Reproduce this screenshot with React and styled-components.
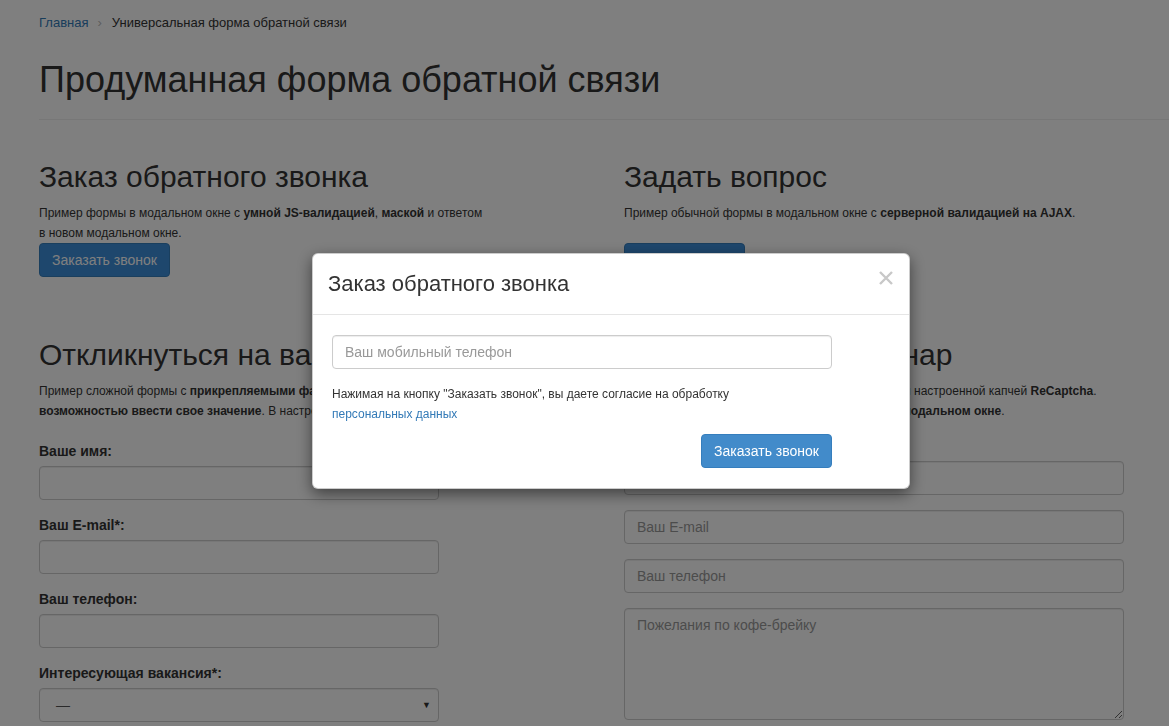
import React from "react"
import styled, { createGlobalStyle } from "styled-components"

const GlobalStyle = createGlobalStyle`
  * { box-sizing: border-box; }
  html, body {
    margin: 0;
    padding: 0;
    background: #fff;
  }
  body {
    font-family: "Liberation Sans", Arial, Helvetica, sans-serif;
    font-size: 13px;
    line-height: 20px;
    color: #333;
    overflow: hidden;
  }
`

//  Page
const Page = styled.div`
  height: 726px;
  padding-left: 39px;
  overflow: hidden;
`

const Breadcrumb = styled.nav`
  display: flex;
  align-items: center;
  padding-top: 14px;
  font-size: 13px;
  line-height: 18px;
`

const Crumb = styled.a`
  color: #337ab7;
  text-decoration: none;
`

const Sep = styled.span`
  color: #bbb;
  margin: 0 10px 0 9px;
`

const PageTitle = styled.h1`
  margin: 28px 0 0;
  font-size: 36px;
  line-height: 39.6px;
  font-weight: 400;
`

const Hr = styled.hr`
  margin: 19px 0 0;
  border: 0;
  border-top: 1px solid #eee;
`

const Row = styled.div`
  display: grid;
  grid-template-columns: 585px 1fr;
  margin-top: ${p => p.$top}px;
`

const H2 = styled.h2`
  margin: 0;
  font-size: 30px;
  line-height: 33px;
  font-weight: 400;
  white-space: nowrap;
`

const Lead = styled.p`
  margin: 10px 0 0;
  min-height: 40px;
  font-size: 12px;
  line-height: 20px;
  white-space: nowrap;

  b {
    font-weight: 700;
  }
`

const Button = styled.button`
  display: inline-block;
  height: 34px;
  padding: 0 12px;
  font-family: inherit;
  font-size: 14px;
  color: #fff;
  background: ${p => p.$bg || "#428bca"};
  border: 1px solid #357ebd;
  border-radius: 4px;
  cursor: pointer;
`

//  Forms
const Form = styled.form`
  margin-top: ${p => p.$top}px;
`

const Group = styled.div`
  margin-bottom: 15px;
`

const Label = styled.label`
  display: block;
  margin-bottom: 5px;
  font-size: 14px;
  font-weight: 700;
  line-height: 20px;
`

const Input = styled.input`
  display: block;
  width: ${p => p.$w}px;
  height: 34px;
  padding: 6px 12px;
  font-family: inherit;
  font-size: 14px;
  color: #555;
  background: #fff;
  border: 1px solid #ccc;
  border-radius: 4px;
  box-shadow: inset 0 1px 1px rgba(0, 0, 0, 0.075);
  outline: none;

  &::placeholder {
    color: #999;
  }
`

const TextArea = styled.textarea`
  display: block;
  width: ${p => p.$w}px;
  height: 112px;
  padding: 6px 12px;
  font-family: inherit;
  font-size: 14px;
  line-height: 20px;
  color: #555;
  border: 1px solid #ccc;
  border-radius: 4px;
  box-shadow: inset 0 1px 1px rgba(0, 0, 0, 0.075);
  resize: vertical;
  outline: none;

  &::placeholder {
    color: #999;
  }
`

const Select = styled.div`
  display: flex;
  align-items: center;
  justify-content: space-between;
  width: 400px;
  height: 34px;
  padding: 0 7px 0 16px;
  font-size: 14px;
  color: #555;
  background: #fff;
  border: 1px solid #ccc;
  border-radius: 4px;
  box-shadow: inset 0 1px 1px rgba(0, 0, 0, 0.075);
`

const Caret = styled.span`
  font-size: 9px;
  color: #333;
`

//  Modal
const Backdrop = styled.div`
  position: fixed;
  inset: 0;
  background: rgba(0, 0, 0, 0.5);
`

const Modal = styled.div`
  position: fixed;
  top: 253px;
  left: 312px;
  width: 598px;
  background: #fff;
  border: 1px solid rgba(0, 0, 0, 0.2);
  border-radius: 6px;
  box-shadow: 0 5px 15px rgba(0, 0, 0, 0.5);
`

const ModalHeader = styled.div`
  display: flex;
  justify-content: space-between;
  align-items: flex-start;
  padding: 15px;
  border-bottom: 1px solid #e5e5e5;
`

const ModalTitle = styled.h4`
  margin: 0;
  font-size: 22px;
  line-height: 30px;
  font-weight: 400;
  color: #333;
`

const Close = styled.button`
  display: flex;
  margin: 1px 0 0;
  padding: 0;
  background: transparent;
  border: 0;
  cursor: pointer;
`

const ModalBody = styled.div`
  padding: 20px 20px 20px 19px;
`

const BodyInner = styled.div`
  width: 500px;
`

const Consent = styled.p`
  margin: 15px 0 0;
  font-size: 12px;
  line-height: 20px;

  a {
    color: #337ab7;
    text-decoration: none;
  }
`

const Actions = styled.div`
  display: flex;
  justify-content: flex-end;
  margin-top: 10px;
`

const CloseIcon = () => (
  <svg width="16" height="16" viewBox="0 0 16 16">
    <path d="M2 2 L14 14 M14 2 L2 14" stroke="#c8c8c8" strokeWidth="2.4" strokeLinecap="butt" />
  </svg>
)

const App = () => {
  return (
    <>
      <GlobalStyle />
      <Page>
        <Breadcrumb>
          <Crumb href="#">Главная</Crumb>
          <Sep>›</Sep>
          <span>Универсальная форма обратной связи</span>
        </Breadcrumb>

        <PageTitle>Продуманная форма обратной связи</PageTitle>
        <Hr />

        <Row $top={40}>
          <div>
            <H2>Заказ обратного звонка</H2>
            <Lead>
              Пример формы в модальном окне с <b>умной JS-валидацией</b>, <b>маской</b> и ответом
              <br />
              в новом модальном окне.
            </Lead>
            <Button $bg="#3d8fdb">Заказать звонок</Button>
          </div>
          <div>
            <H2>Задать вопрос</H2>
            <Lead>
              Пример обычной формы в модальном окне с <b>серверной валидацией на AJAX</b>.
            </Lead>
            <Button $bg="#3d8fdb">Задать вопрос</Button>
          </div>
        </Row>

        <Row $top={61}>
          <div>
            <H2>Откликнуться на вакансию</H2>
            <Lead>
              Пример сложной формы с <b>прикрепляемыми файлами</b> и <b>списком</b> с
              <br />
              <b>возможностью ввести свое значение</b>. В настройках.
            </Lead>
            <Form $top={20}>
              <Group>
                <Label>Ваше имя:</Label>
                <Input $w={400} />
              </Group>
              <Group>
                <Label>Ваш E-mail*:</Label>
                <Input $w={400} />
              </Group>
              <Group>
                <Label>Ваш телефон:</Label>
                <Input $w={400} />
              </Group>
              <Group>
                <Label>Интересующая вакансия*:</Label>
                <Select>
                  <span>—</span>
                  <Caret>▼</Caret>
                </Select>
              </Group>
            </Form>
          </div>
          <div>
            <H2>Записаться на семинар</H2>
            <Lead>
              Пример формы записи с <b>прикреплением файла</b> и настроенной капчей <b>ReCaptcha</b>.
              <br />
              Результат отправки формы сразу показывается в <b>модальном окне</b>.
            </Lead>
            <Form $top={40}>
              <Group>
                <Input $w={500} placeholder="Ваше имя" />
              </Group>
              <Group>
                <Input $w={500} placeholder="Ваш E-mail" />
              </Group>
              <Group>
                <Input $w={500} placeholder="Ваш телефон" />
              </Group>
              <Group>
                <TextArea $w={500} placeholder="Пожелания по кофе-брейку" />
              </Group>
            </Form>
          </div>
        </Row>
      </Page>

      <Backdrop />
      <Modal>
        <ModalHeader>
          <ModalTitle>Заказ обратного звонка</ModalTitle>
          <Close aria-label="Закрыть">
            <CloseIcon />
          </Close>
        </ModalHeader>
        <ModalBody>
          <BodyInner>
            <Input $w={500} placeholder="Ваш мобильный телефон" />
            <Consent>
              Нажимая на кнопку "Заказать звонок", вы даете согласие на обработку
              <br />
              <a href="#">персональных данных</a>
            </Consent>
            <Actions>
              <Button>Заказать звонок</Button>
            </Actions>
          </BodyInner>
        </ModalBody>
      </Modal>
    </>
  )
}

export default App
